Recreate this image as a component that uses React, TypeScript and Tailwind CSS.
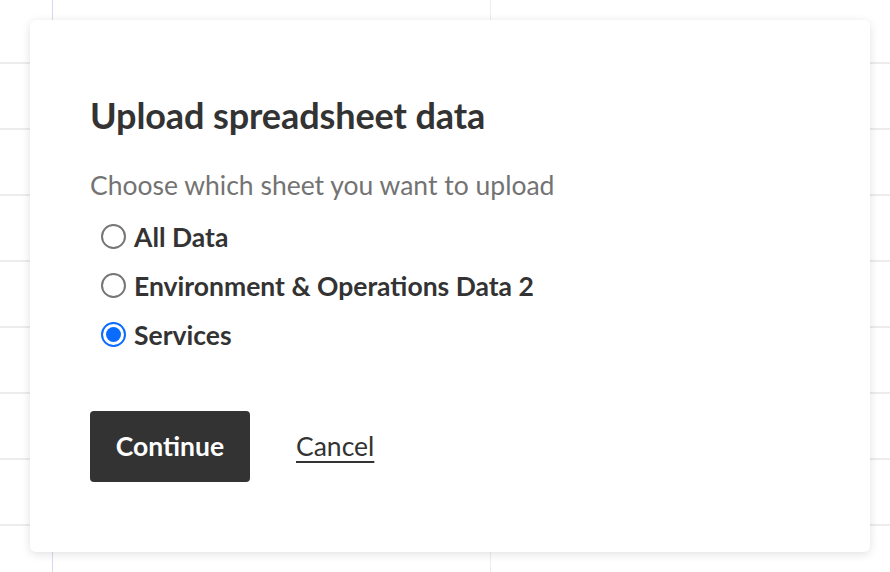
import { useState } from "react";

const options = ["All Data", "Environment & Operations Data 2", "Services"];

function BackgroundGrid() {
  const rows = Array.from({ length: 9 });
  return (
    <div className="flex flex-col">
      {rows.map((_, i) => (
        <div key={i} className="flex h-[66px] border-b-2 border-[#ececec]">
          <div className="w-[53px] shrink-0 border-r border-[#ddd6f0]" />
          <div className="w-[438px] shrink-0 border-r border-[#ececec]" />
          <div className="flex-1" />
        </div>
      ))}
    </div>
  );
}

export default function App() {
  const [selected, setSelected] = useState("Services");

  return (
    <div
      className="relative h-[572px] w-[890px] overflow-hidden bg-white text-[#333333]"
      style={{ fontFamily: '"Source Sans Pro", Lato, "Noto Sans", sans-serif' }}
    >
      <div className="-mt-[2px]">
        <BackgroundGrid />
      </div>

      <div className="absolute left-[30px] top-[20px] h-[532px] w-[840px] rounded-[6px] bg-white pl-[60px] pt-[74px] shadow-[0_2px_10px_rgba(0,0,0,0.12)]">
        <h1 className="text-[36px] font-bold leading-[42px] tracking-[-0.1px]">Upload spreadsheet data</h1>

        <p className="mt-[32px] text-[26.5px] leading-[34px] text-[#737373]">
          Choose which sheet you want to upload
        </p>

        <div className="mt-[10px] flex flex-col">
          {options.map((opt) => {
            const checked = selected === opt;
            return (
              <label
                key={opt}
                className="flex h-[49px] cursor-pointer items-center gap-[8px] pl-[11px]"
                onClick={() => setSelected(opt)}
              >
                {checked ? (
                  <span className="flex h-[25px] w-[25px] items-center justify-center rounded-full border-2 border-[#0a6cff] bg-white">
                    <span className="h-[15px] w-[15px] rounded-full bg-[#0a6cff]" />
                  </span>
                ) : (
                  <span className="h-[25px] w-[25px] rounded-full border-2 border-[#767676] bg-white" />
                )}
                <span className="text-[26.5px] font-bold leading-[34px]">{opt}</span>
              </label>
            );
          })}
        </div>

        <div className="mt-[52px] flex items-center gap-[46px]">
          <button className="h-[71px] w-[160px] rounded-[4px] bg-[#333333] text-[26.5px] font-bold text-white">
            Continue
          </button>
          <a href="#" className="text-[26.5px] text-[#333333] underline underline-offset-[5px] decoration-[1.5px]">
            Cancel
          </a>
        </div>
      </div>
    </div>
  );
}
